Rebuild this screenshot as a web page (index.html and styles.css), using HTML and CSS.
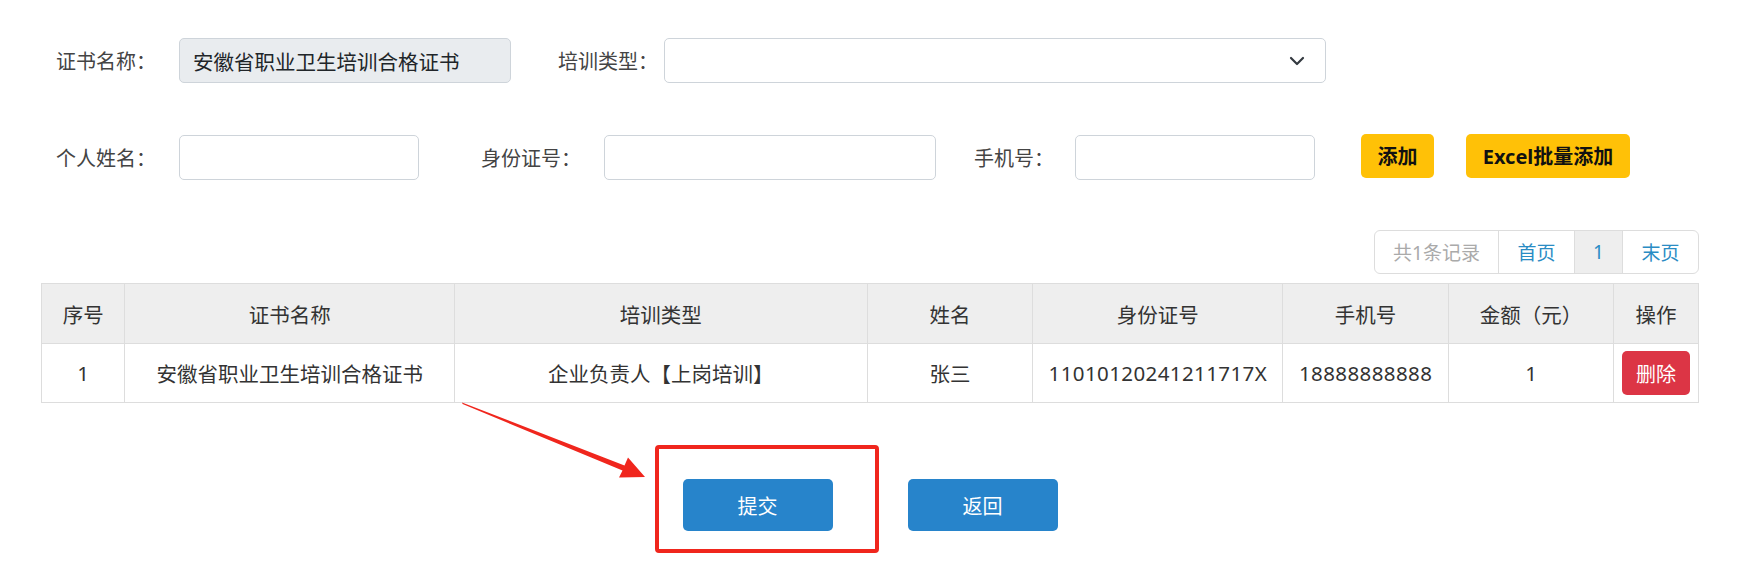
FILE: index.html
```html
<!DOCTYPE html>
<html lang="zh-CN">
<head>
  <meta charset="UTF-8" />
  <title>证书申请</title>
  <link rel="stylesheet" href="styles.css">
</head>
<body>
  <div class="page">
    <div class="form-row row-1">
      <div class="field">
        <label class="lbl w-123">证书名称：</label>
        <div class="input readonly w-332">安徽省职业卫生培训合格证书</div>
      </div>
      <div class="field ml-47">
        <label class="lbl w-106">培训类型：</label>
        <div class="input select w-662">
          <svg width="16" height="10" viewBox="0 0 16 10"><path d="M2 2 L8 8 L14 2" fill="none" stroke="#343a40" stroke-width="2.2" stroke-linecap="round" stroke-linejoin="round"/></svg>
        </div>
      </div>
    </div>

    <div class="form-row row-2">
      <div class="field">
        <label class="lbl w-123">个人姓名：</label>
        <div class="input w-240"></div>
      </div>
      <div class="field ml-62">
        <label class="lbl w-123">身份证号：</label>
        <div class="input w-332"></div>
      </div>
      <div class="field ml-38">
        <label class="lbl w-101">手机号：</label>
        <div class="input w-240"></div>
      </div>
      <button class="btn-yellow add">添加</button>
      <button class="btn-yellow excel">Excel批量添加</button>
    </div>

    <div class="pager-wrap">
      <ul class="pager">
        <li class="total">共1条记录</li>
        <li class="link">首页</li>
        <li class="active">1</li>
        <li class="link">末页</li>
      </ul>
    </div>

    <table class="list">
      <thead>
        <tr>
          <th class="c1">序号</th>
          <th class="c2">证书名称</th>
          <th class="c3">培训类型</th>
          <th class="c4">姓名</th>
          <th class="c5">身份证号</th>
          <th class="c6">手机号</th>
          <th class="c7">金额（元）</th>
          <th class="c8">操作</th>
        </tr>
      </thead>
      <tbody>
        <tr>
          <td>1</td>
          <td>安徽省职业卫生培训合格证书</td>
          <td>企业负责人【上岗培训】</td>
          <td>张三</td>
          <td class="num">11010120241211717X</td>
          <td class="num">18888888888</td>
          <td>1</td>
          <td><button class="btn-del">删除</button></td>
        </tr>
      </tbody>
    </table>

    <div class="actions">
      <div class="submit-wrap">
        <button class="btn-blue">提交</button>
        <div class="mark-box"></div>
      </div>
      <button class="btn-blue">返回</button>
    </div>
  </div>

  <!-- 标注箭头 -->
  <svg class="mark-arrow" width="1753" height="565" viewBox="0 0 1753 565">
    <polygon points="462,402.5 462.6,404 622.5,470.5 619,477.5 645,477 628,457.5 624.5,465.5" fill="#f0261d"/>
  </svg>
</body>
</html>
```

FILE: styles.css
```css
html, body {
  margin: 0;
  min-height: 565px;
}
body {
  font-family: "Noto Sans", "Noto Sans CJK SC", sans-serif;
  font-size: 20px;
  color: #333;
  background: #fff;
  position: relative;
}
.page {
  padding: 38px 54px 34px 41px;
}
.form-row {
  display: flex;
  align-items: center;
  padding-left: 15px;
}
.row-2 {
  margin-top: 52px;
}
.field {
  display: flex;
  align-items: center;
}
.lbl {
  color: #444;
  font-size: 20px;
  white-space: nowrap;
}
.input {
  box-sizing: border-box;
  height: 45px;
  border: 1px solid #ced4da;
  border-radius: 5px;
  background: #fff;
  display: flex;
  align-items: center;
  padding: 0 13px;
  color: #212529;
  font-size: 20.5px;
}
.readonly {
  background: #e9ecef;
}
.select {
  justify-content: flex-end;
  padding-right: 20px;
}
.w-101 { width: 101px; }
.w-106 { width: 106px; }
.w-123 { width: 123px; }
.w-240 { width: 240px; }
.w-332 { width: 332px; }
.w-662 { width: 662px; }
.ml-38 { margin-left: 38px; }
.ml-47 { margin-left: 47px; }
.ml-62 { margin-left: 62px; }

.btn-yellow {
  height: 44px;
  margin-top: -4px;
  border: none;
  border-radius: 5px;
  background: #ffc107;
  color: #111;
  font-family: inherit;
  font-size: 20px;
  font-weight: bold;
  padding: 0;
  cursor: pointer;
}
.add {
  width: 73px;
  margin-left: 46px;
}
.excel {
  width: 164px;
  margin-left: 32px;
}

.pager-wrap {
  display: flex;
  justify-content: flex-end;
  margin-top: 50px;
}
.pager {
  display: flex;
  list-style: none;
  margin: 0;
  padding: 0;
  border: 1px solid #ddd;
  border-radius: 6px;
  overflow: hidden;
  height: 44px;
  box-sizing: border-box;
}
.pager li {
  display: flex;
  align-items: center;
  justify-content: center;
  box-sizing: border-box;
  font-size: 19px;
  color: #2a8cc4;
  border-left: 1px solid #ddd;
}
.pager li:first-child {
  border-left: none;
}
.pager .total {
  color: #aaa;
  width: 123px;
}
.pager .link {
  width: 76px;
}
.pager .active {
  background: #eee;
  width: 48px;
}

.list {
  width: 100%;
  margin-top: 9px;
  border-collapse: collapse;
  font-size: 20.5px;
}
.list th, .list td {
  border: 1px solid #ddd;
  text-align: center;
  padding: 0;
  font-weight: normal;
}
.list th {
  background: #eee;
  height: 59px;
}
.list td {
  height: 58px;
}
.list .num {
  letter-spacing: 0.4px;
}
.c1 { width: 83px; }
.c2 { width: 331px; }
.c3 { width: 415px; }
.c4 { width: 166px; }
.c5 { width: 249px; }
.c6 { width: 165px; }
.c7 { width: 165px; }
.c8 { width: 84px; }
.btn-del {
  width: 68px;
  height: 44px;
  border: none;
  border-radius: 5px;
  background: #dc3545;
  color: #fff;
  font-family: inherit;
  font-size: 20px;
  padding: 0;
  vertical-align: middle;
}

.actions {
  display: flex;
  justify-content: center;
  gap: 75px;
  margin-top: 76px;
}
.submit-wrap {
  position: relative;
}
.btn-blue {
  width: 150px;
  height: 52px;
  border: none;
  border-radius: 5px;
  background: #2784cb;
  color: #fff;
  font-family: inherit;
  font-size: 20px;
  padding: 0;
  display: block;
}
.mark-box {
  position: absolute;
  left: -28px;
  top: -34px;
  width: 224px;
  height: 108px;
  box-sizing: border-box;
  border: 4px solid #f0261d;
  border-radius: 4px;
}
.mark-arrow {
  position: absolute;
  left: 0;
  top: 0;
  pointer-events: none;
}
```
